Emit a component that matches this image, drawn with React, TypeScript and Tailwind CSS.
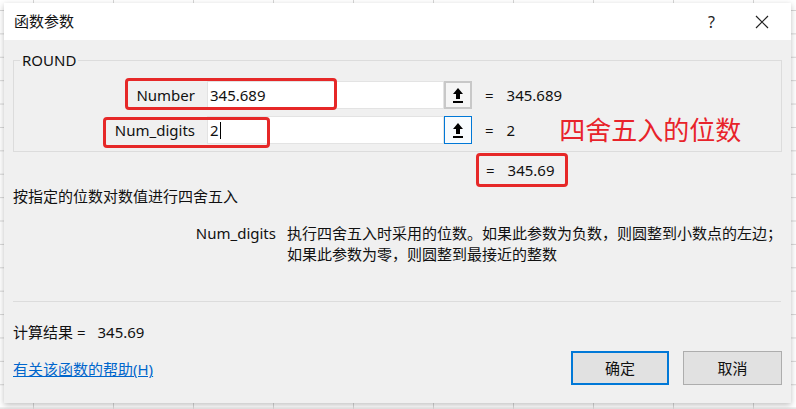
import React from 'react';

const font = "font-['Noto_Sans','Noto_Sans_CJK_SC',sans-serif]";

const PickIcon = () => (
  <svg width="12" height="17" viewBox="0 0 12 17">
    <path d="M6 1 L11 7 L8 7 L8 12 L4 12 L4 7 L1 7 Z" fill="#000" />
    <rect x="1" y="14" width="10" height="2" fill="#000" />
  </svg>
);

const ArgRow = ({ label, value, result, active, cursor, note }: { label: string; value: string; result: string; active?: boolean; cursor?: boolean; note?: string }) => (
  <div className="flex items-center h-[28px]">
    <div className="w-[193px] pr-[12px] text-right text-[15px] text-[#111]">{label}</div>
    <div className="w-[237px] h-full bg-white border border-[#e3e3e3] flex items-center pl-[2px] text-[15px] text-[#111]">
      {value}
      {cursor && <span className="inline-block w-px h-[17px] bg-black ml-px" />}
    </div>
    <div
      className={
        active
          ? 'w-[28px] h-full flex items-center justify-center border border-[#0078d7] bg-[#f7fbfe]'
          : 'w-[28px] h-full flex items-center justify-center border-2 border-[#c8c8c8] bg-[#f5f5f5]'
      }
    >
      <PickIcon />
    </div>
    <div className="pl-[13px] text-[15px] text-[#111]">=</div>
    <div className="pl-[13px] text-[15px] text-[#111]">{result}</div>
    {note && <div className="ml-[44px] text-[26px] leading-none text-[#e8232a]">{note}</div>}
  </div>
);

export default function App() {
  return (
    <div
      className={`${font} relative w-[796px] h-[409px] overflow-hidden bg-white bg-[linear-gradient(to_right,#d6d6d6_1px,transparent_1px),linear-gradient(to_bottom,#d6d6d6_1px,transparent_1px)] bg-[size:80px_23.4px] bg-[position:33px_10px]`}
    >
      {/* dialog window */}
      <div className="absolute left-[4px] top-[3px] w-[787px] h-[400px] bg-[#f0f0f0] shadow-[0_2px_6px_rgba(0,0,0,0.25)] flex flex-col">
        <div className="h-[37px] bg-white flex items-center justify-between pl-[10px] pr-[22px]">
          <span className="text-[15px] text-[#111]">函数参数</span>
          <div className="flex items-center gap-[40px] text-[#222]">
            <span className="text-[16px]">?</span>
            <svg width="14" height="14" viewBox="0 0 14 14">
              <path d="M1 1 L13 13 M13 1 L1 13" stroke="#222" strokeWidth="1.2" />
            </svg>
          </div>
        </div>

        <div className="flex-1 flex flex-col px-[9px]">
          <fieldset className="mt-[10px] border border-[#dcdcdc] pt-[11px] pb-[7px]">
            <legend className="ml-[6px] px-[2px] text-[15px] leading-[20px] text-[#111]">ROUND</legend>
            <div className="flex flex-col gap-[7px]">
              <ArgRow label="Number" value="345.689" result="345.689" />
              <ArgRow label="Num_digits" value="2" result="2" active cursor note="四舍五入的位数" />
            </div>
          </fieldset>

          <div className="mt-[8px] flex items-center h-[20px] pl-[473px] text-[15px] text-[#111]">
            <span>=</span>
            <span className="pl-[13px]">345.69</span>
          </div>

          <div className="mt-[6px] leading-[20px] text-[15px] text-[#111]">按指定的位数对数值进行四舍五入</div>

          <div className="mt-[17px] flex text-[15px] leading-[21px] text-[#111]">
            <div className="w-[274px] pr-[11px] text-right">Num_digits</div>
            <div className="whitespace-nowrap">
              执行四舍五入时采用的位数。如果此参数为负数，则圆整到小数点的左边；
              <br />
              如果此参数为零，则圆整到最接近的整数
            </div>
          </div>

          <div className="mt-[36px] h-px bg-[#dcdcdc] mr-[1px]" />

          <div className="mt-[20px] leading-[20px] text-[15px] text-[#111]">
            计算结果 =<span className="pl-[12px]">345.69</span>
          </div>

          <div className="mt-[9px] flex items-end justify-between">
            <a className="mb-[6px] text-[15px] leading-[20px] text-[#0066cc] underline">有关该函数的帮助(H)</a>
            <div className="flex gap-[14px]">
              <button className="w-[98px] h-[34px] border-2 border-[#0078d7] bg-[#e1e1e1] text-[15px] text-[#111]">确定</button>
              <button className="w-[99px] h-[34px] border border-[#adadad] bg-[#e1e1e1] text-[15px] text-[#111]">取消</button>
            </div>
          </div>
        </div>

        {/* red annotation boxes */}
        <div className="absolute left-[121px] top-[75px] w-[212px] h-[32px] border-[3px] border-[#e62828] rounded-[4px]" />
        <div className="absolute left-[99px] top-[114px] w-[167px] h-[31px] border-[3px] border-[#e62828] rounded-[4px]" />
        <div className="absolute left-[472px] top-[150px] w-[92px] h-[34px] border-[3px] border-[#e62828] rounded-[4px]" />
      </div>
    </div>
  );
}
